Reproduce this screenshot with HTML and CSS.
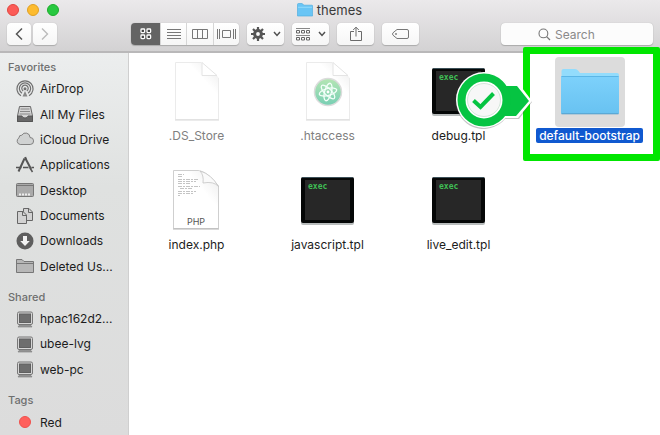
FILE: index.html
```html
<!DOCTYPE html>
<html lang="en">
<head>
  <meta charset="UTF-8">
  <meta name="viewport" content="width=device-width,initial-scale=1">
  <title>themes</title>
  <link rel="stylesheet" href="styles.css">
</head>
<body>

  <!-- shapes used more than once -->
  <svg class="defs" aria-hidden="true">
    <defs>
      <linearGradient id="paper" x1="0" y1="1" x2="1" y2="0">
        <stop offset="0.5" stop-color="#fff"/><stop offset="1" stop-color="#eaeaea"/>
      </linearGradient>
      <linearGradient id="folderblue" x1="0" y1="0" x2="0" y2="1">
        <stop offset="0" stop-color="#7dd1fb"/><stop offset="1" stop-color="#68c2f1"/>
      </linearGradient>
      <linearGradient id="atomgreen" x1="0" y1="0" x2="0" y2="1">
        <stop offset="0" stop-color="#b5e6b4"/><stop offset="1" stop-color="#78cfb4"/>
      </linearGradient>
      <symbol id="exec" viewBox="0 0 70 70">
        <rect x="8" y="12" width="53" height="47" rx="2" fill="#b8bcbc"/>
        <rect x="8" y="11" width="53" height="46" rx="2" fill="#050707"/>
        <path d="M9 11.5H60" stroke="#3c5058"/>
        <rect x="12" y="14" width="45" height="40" fill="#272727"/>
        <text x="15" y="23" class="exectext">exec</text>
      </symbol>
      <symbol id="pc" viewBox="0 0 18 18">
        <rect x="1.5" y="2" width="15" height="12.5" rx="1.5" fill="#d6d6d6" stroke="#777"/>
        <rect x="3.5" y="4" width="11" height="8.5" fill="#6e6e6e" stroke="#606060"/>
        <path d="M3 15.5H15L16 17H2Z" fill="#999" stroke="#777" stroke-width=".6"/>
      </symbol>
      <symbol id="down" viewBox="0 0 8 6">
        <path d="M1 1L4 4.4L7 1" fill="none" stroke="#505050" stroke-width="1.5"/>
      </symbol>
    </defs>
  </svg>

  <header class="toolbar">
    <div class="titlebar">
      <div class="lights">
        <button class="light red" aria-label="Close"></button>
        <button class="light yellow" aria-label="Minimize"></button>
        <button class="light green" aria-label="Zoom"></button>
      </div>
      <h1 class="title">
        <svg width="16" height="14" viewBox="0 0 16 14"><path d="M.5 13V1.5Q.5.5 1.5.5H5L7 2.2H15Q15.6 2.2 15.6 3V13Z" fill="#69c5f5" stroke="#51afe0" stroke-width=".7"/><path d="M1 4.3H15" stroke="#91dafc"/></svg>
        themes
      </h1>
    </div>

    <div class="tools">
      <div class="nav">
        <button class="tool" aria-label="Back"><svg width="8" height="14" viewBox="0 0 8 14"><path d="M7 1.5L1.5 7L7 12.5" fill="none" stroke="#555" stroke-width="1.5"/></svg></button>
        <button class="tool" aria-label="Forward"><svg width="8" height="14" viewBox="0 0 8 14"><path d="M1 1.5L6.5 7L1 12.5" fill="none" stroke="#bbb" stroke-width="1.4"/></svg></button>
      </div>

      <div class="views">
        <button class="view selected" aria-label="Icons"><svg width="12" height="12" viewBox="0 0 12 12" fill="#444" stroke="#fff" stroke-width="1.3"><rect x="1" y="1" width="3.6" height="3.6" rx=".8"/><rect x="7" y="1" width="3.6" height="3.6" rx=".8"/><rect x="1" y="7" width="3.6" height="3.6" rx=".8"/><rect x="7" y="7" width="3.6" height="3.6" rx=".8"/></svg></button>
        <button class="view" aria-label="List"><svg width="14" height="12" viewBox="0 0 14 12"><path d="M0 1.5H14M0 4.5H14M0 7.5H14M0 10.5H14" stroke="#777"/></svg></button>
        <button class="view" aria-label="Columns"><svg width="16" height="12" viewBox="0 0 16 12"><path d="M.5 1.5H15.5V10.5H.5ZM5.5 1.5V10.5M10.5 1.5V10.5" fill="none" stroke="#777"/></svg></button>
        <button class="view" aria-label="Cover Flow"><svg width="19" height="12" viewBox="0 0 19 12"><path d="M5.5 2.5H13.5V9.5H5.5ZM.5 1V11M2.5 1V11M16.5 1V11M18.5 1V11" fill="none" stroke="#777"/></svg></button>
      </div>

      <button class="tool wide" aria-label="Action">
        <svg width="14" height="14" viewBox="0 0 14 14" fill="none" stroke="#555"><path d="M7 0V3M7 11V14M0 7H3M11 7H14M2 2L4.2 4.2M9.8 9.8L12 12M12 2L9.8 4.2M4.2 9.8L2 12" stroke-width="2.2"/><circle cx="7" cy="7" r="3.4" stroke-width="3"/></svg>
        <svg width="8" height="6"><use href="#down"/></svg>
      </button>
      <button class="tool wide" aria-label="Arrange">
        <svg width="14" height="14" viewBox="0 0 14 14" fill="none" stroke="#666"><path d="M0 1.5H14M0 8.5H14" stroke="#888"/><path d="M.5 3.5H3.5V6H.5ZM5.5 3.5H8.5V6H5.5ZM10.5 3.5H13.5V6H10.5ZM.5 10.5H3.5V13H.5ZM5.5 10.5H8.5V13H5.5ZM10.5 10.5H13.5V13H10.5Z"/></svg>
        <svg width="8" height="6"><use href="#down"/></svg>
      </button>
      <button class="tool wide" aria-label="Share"><svg width="12" height="16" viewBox="0 0 12 16"><path d="M4 5.5H.5V14.5H11.5V5.5H8M6 10.5V1.2M3.2 4L6 1.2L8.8 4" fill="none" stroke="#6a6a6a"/></svg></button>
      <button class="tool wide" aria-label="Edit Tags"><svg width="17" height="10" viewBox="0 0 17 10"><path d="M5 .5H15Q16.5.5 16.5 2V8Q16.5 9.5 15 9.5H5L1 6.2Q0 5 1 3.8Z" fill="none" stroke="#777"/><circle cx="4" cy="5" r=".9" fill="#777"/></svg></button>

      <label class="search">
        <svg width="13" height="13" viewBox="0 0 13 13"><circle cx="5.4" cy="5.4" r="4.4" fill="none" stroke="#777" stroke-width="1.1"/><path d="M8.6 8.6L12 12" stroke="#777" stroke-width="1.3"/></svg>
        <input type="search" placeholder="Search" aria-label="Search">
      </label>
    </div>
  </header>

  <div class="window">
    <nav class="sidebar">
      <h2>Favorites</h2>
      <ul class="favorites">
        <li><a href="#"><svg viewBox="0 0 18 18" fill="none" stroke="#707070" stroke-width="1.2"><path d="M5 15.8A8 8 0 1 1 13 15.8M6 13.2A5.6 5.6 0 1 1 12 13.2M7.2 11A3.2 3.2 0 1 1 10.8 11"/><circle cx="9" cy="8.8" r=".9" fill="#666"/><path d="M9 11L6.5 16.5H11.5Z" fill="#888" stroke="none"/></svg>AirDrop</a></li>
        <li><a href="#"><svg viewBox="0 0 18 18"><path d="M3.5 1.5H14.5L16.5 11V16.5H1.5V11Z" fill="#d5d5d5" stroke="#666"/><path d="M4.5 4H13.5M4 6.5H14M3.5 9H14.5" stroke="#888"/><path d="M1.5 11H6Q6 13 9 13Q12 13 12 11H16.5V16.5H1.5Z" fill="#686868" stroke="#555"/></svg>All My Files</a></li>
        <li><a href="#"><svg viewBox="0 0 18 18"><path d="M4.2 14.5A3.6 3.6 0 0 1 3 7.8A2.6 2.6 0 0 1 5.8 5.2A4.4 4.4 0 0 1 14 7.5A3.5 3.5 0 0 1 14.2 14.5Z" fill="#d0d2d2" stroke="#808080"/></svg>iCloud Drive</a></li>
        <li><a href="#"><svg viewBox="0 0 18 18" fill="none" stroke="#555"><path d="M8.5 2.5L2.5 15.5M9.5 2.5L15 13" stroke-width="2"/><path d="M9.2 1L10 4" stroke-width="2"/><path d="M0 11.5H5.5M7 11.5H12.5M15.5 11.5H18" stroke-width="1.4"/><path d="M14 12L16.5 16" stroke-width="1.5"/></svg>Applications</a></li>
        <li><a href="#"><svg viewBox="0 0 18 18"><rect x=".5" y="2.5" width="17" height="13" rx="1" fill="#aaa" stroke="#777"/><path d="M1 4.5H17" stroke="#777"/><path d="M3 13.5H15" stroke="#eee" stroke-width="2" stroke-dasharray="2 1"/></svg>Desktop</a></li>
        <li><a href="#"><svg viewBox="0 0 18 18" fill="#d2d2d2" stroke="#666"><path d="M7.5 1.5H13L16.5 5V13.5H7.5Z"/><path d="M12.5 1.5V5.5H16.5" fill="none"/><path d="M1.5 4.5H7L10.5 8V16.5H1.5Z"/><path d="M6.5 4.5V8.5H10.5" fill="none"/></svg>Documents</a></li>
        <li><a href="#"><svg viewBox="0 0 18 18"><circle cx="9" cy="9" r="8.5" fill="#5e5e5e"/><path d="M7 4H11V9H13.8L9 14L4.2 9H7Z" fill="#f2f2f2"/></svg>Downloads</a></li>
        <li><a href="#"><svg viewBox="0 0 18 18"><path d="M.5 15.5V2.5H6L8 4.5H17.5V15.5Z" fill="#b7b7b7" stroke="#777"/><path d="M1 6.5H17" stroke="#777"/></svg>Deleted Us...</a></li>
      </ul>
      <h2>Shared</h2>
      <ul class="shared">
        <li><a href="#"><svg><use href="#pc"/></svg>hpac162d2...</a></li>
        <li><a href="#"><svg><use href="#pc"/></svg>ubee-lvg</a></li>
        <li><a href="#"><svg><use href="#pc"/></svg>web-pc</a></li>
      </ul>
      <h2>Tags</h2>
      <ul class="tags">
        <li><a href="#"><svg viewBox="0 0 18 18"><circle cx="9" cy="9" r="5.5" fill="#ff605c" stroke="#f0504c"/></svg>Red</a></li>
      </ul>
    </nav>

    <main class="files">
      <a class="file dim" href="#">
        <svg class="icon" viewBox="0 0 70 70"><path d="M13.5 5.5H39L56.5 21V62.5H13.5Z" fill="#fff" stroke="#ebebeb"/><path d="M26 6H39L56 21V38Z" fill="url(#paper)"/><path d="M40 5.5V18.5H55Z" fill="#fff" stroke="#e4e4e4"/><path d="M13 63H57" stroke="#d8d8d8"/></svg>
        <span class="name">.DS_Store</span>
      </a>
      <a class="file dim" href="#">
        <svg class="icon" viewBox="0 0 70 70"><path d="M13.5 5.5H39L56.5 21V62.5H13.5Z" fill="#fff" stroke="#ebebeb"/><path d="M26 6H39L56 21V38Z" fill="url(#paper)"/><path d="M40 5.5V18.5H55Z" fill="#fff" stroke="#e4e4e4"/><path d="M13 63H57" stroke="#d8d8d8"/>
          <circle cx="35" cy="35" r="13.5" fill="url(#atomgreen)" stroke="#dcdcdc" stroke-width="1.5"/>
          <g fill="none" stroke="#f4fffa" stroke-width="1.3"><ellipse cx="35" cy="35" rx="3.4" ry="9" transform="rotate(15 35 35)"/><ellipse cx="35" cy="35" rx="3.4" ry="9" transform="rotate(75 35 35)"/><ellipse cx="35" cy="35" rx="3.4" ry="9" transform="rotate(135 35 35)"/></g>
          <circle cx="35" cy="35" r="1.4" fill="#fff"/></svg>
        <span class="name">.htaccess</span>
      </a>
      <a class="file" href="#">
        <svg class="icon"><use href="#exec"/></svg>
        <span class="name">debug.tpl</span>
      </a>
      <a class="file active" href="#">
        <svg class="icon" viewBox="0 0 70 70"><path d="M6.5 56V14Q6.5 12 8.5 12H20Q22 12 23.5 14L25 16H62Q64 16 64 18V56Z" fill="#93dcfc"/><rect x="6" y="19" width="58" height="38" rx="1" fill="url(#folderblue)"/><path d="M6.5 19.5H63.5" stroke="#5cb6e6"/><path d="M6.5 56.8H63.5" stroke="#549fca"/></svg>
        <span class="name">default-bootstrap</span>
        <span class="frame"></span>
        <svg class="pointer" width="80" height="62" viewBox="0 0 80 62">
          <path d="M30 3A28 28 0 1 0 51 49H65L78 32L65 16H54A28 28 0 0 0 30 3Z" fill="#555" opacity=".35"/>
          <path d="M45 14H65L78 31L64 48H45Z" fill="#fff"/>
          <circle cx="30" cy="30" r="28" fill="#fff"/>
          <path d="M44 16H63L75 31L62 46H44Z" fill="#06c442"/>
          <circle cx="30" cy="30" r="22.5" fill="#fff" stroke="#06c442" stroke-width="8"/>
          <circle cx="30" cy="30" r="16.5" fill="#f7f7f7" stroke="#b9d9c2" stroke-width=".6"/>
          <path d="M19.5 30.5L26.5 37L39.5 23.5" fill="none" stroke="#06c442" stroke-width="4"/>
        </svg>
      </a>
      <a class="file" href="#">
        <svg class="icon" viewBox="0 0 70 70"><path d="M11.5 4.5H36Q45 5 56.5 20V62.5H11.5Z" fill="#fff" stroke="#cfcfcf"/><path d="M24 5H36Q45 6 56 20V42Z" fill="url(#paper)"/><path d="M38 5Q42 9 41 17Q52 15 56.5 20.5Q49 8 38 5Z" fill="#fafafa" stroke="#c4c4c4" stroke-width=".8"/><path d="M11 63H57" stroke="#b4b4b4"/>
          <path d="M16 8.5H22M16 10.5H20M16 13.5H36M16 15.5H34M16 17.5H29M16 20.5H38M18 22.5H30M16 25.5H34M16 27.5H31M16 29.5H18" stroke="#aaa" stroke-width=".7" stroke-dasharray="4 1 2 1"/>
          <text x="34" y="59" text-anchor="middle" class="phptext">PHP</text></svg>
        <span class="name">index.php</span>
      </a>
      <a class="file" href="#">
        <svg class="icon"><use href="#exec"/></svg>
        <span class="name">javascript.tpl</span>
      </a>
      <a class="file" href="#">
        <svg class="icon"><use href="#exec"/></svg>
        <span class="name">live_edit.tpl</span>
      </a>
    </main>
  </div>

</body>
</html>
```

FILE: styles.css
```css
* {
  box-sizing: border-box;
}

body {
  margin: 0;
  min-height: 100vh;
  display: flex;
  flex-direction: column;
  font-family: Inter, Roboto, "Liberation Sans", sans-serif;
  font-size: 12px;
  color: #1c1c1c;
  background: #fff;
}

a {
  color: inherit;
  text-decoration: none;
}

svg {
  flex: none;
}

.defs {
  position: absolute;
  width: 0;
  height: 0;
}


/*toolbar*/

.toolbar {
  height: 53px;
  background: linear-gradient(#ebe9eb, #d3d2d3);
  border-bottom: 2px solid #b9b8b9;
}

.titlebar {
  display: grid;
  grid-template-columns: 1fr auto 1fr;
  align-items: center;
  height: 20px;
  padding: 0 8px 0 7px;
}

.lights {
  display: flex;
  gap: 8px;
}

.light {
  width: 12px;
  height: 12px;
  padding: 0;
  border: 1px solid;
  border-radius: 50%;
}

.light.red {
  background: #fc5b57;
  border-color: #e24640;
}

.light.yellow {
  background: #fdbb2e;
  border-color: #e0a023;
}

.light.green {
  background: #28c840;
  border-color: #1dad2b;
}

.title {
  display: flex;
  align-items: center;
  gap: 4px;
  margin: 0;
  font-size: 13px;
  font-weight: 400;
  color: #3a3a3a;
}

.tools {
  display: flex;
  gap: 8px;
  padding: 3px 7px;
}

.nav {
  display: flex;
  gap: 1px;
  margin-right: 66px;
}

.tool, .view {
  display: flex;
  align-items: center;
  justify-content: center;
  height: 22px;
  padding: 0;
  border: none;
  background: linear-gradient(#fff, #f6f6f6);
}

.tool {
  width: 25px;
  border-radius: 4px;
  box-shadow: 0 0 1px #aaa, 0 1px 1px #aaa;
}

.tool.wide {
  width: 37px;
  gap: 8px;
}

.nav .tool {
  width: 24px;
}

.nav {
  gap: 2px;
}

.views {
  display: flex;
  width: 108px;
  border-radius: 4px;
  box-shadow: 0 0 1px #aaa, 0 1px 1px #aaa;
  overflow: hidden;
}

.view {
  flex: 1;
  border-left: 1px solid #d6d6d6;
}

.view.selected {
  flex: 0 0 29px;
  border: none;
  background: #646464;
}

.search {
  display: flex;
  align-items: center;
  gap: 4px;
  width: 152px;
  height: 22px;
  margin-left: auto;
  padding-left: 37px;
  border-radius: 4px;
  background: #fcfcfc;
  box-shadow: 0 0 1px #aaa, 0 1px 1px #aaa;
}

.search input {
  width: 100%;
  min-width: 0;
  padding: 0;
  border: none;
  outline: none;
  background: none;
  font: inherit;
}

.search input::placeholder {
  color: #8a8a8a;
}


/*sidebar*/

.window {
  flex: 1;
  display: flex;
}

.sidebar {
  width: 129px;
  padding-top: 5px;
  background: linear-gradient(#eceeee, #dfe1e0 35%, #dcdcdc);
  border-right: 1px solid #cfcfcf;
}

.sidebar h2 {
  margin: 9px 0 0 8px;
  font-size: 11px;
  line-height: 18px;
  font-weight: 500;
  color: #6e6f6f;
}

.sidebar h2:first-child {
  margin-top: 0;
}

.sidebar ul {
  display: grid;
  grid-auto-rows: 1fr;
  margin: 0;
  padding: 0 0 0 16px;
  list-style: none;
}

.sidebar .favorites {
  height: 203px;
}

.sidebar .shared {
  height: 76px;
}

.sidebar .tags {
  height: 26px;
}

.sidebar a {
  display: flex;
  align-items: center;
  gap: 6px;
  height: 100%;
  white-space: nowrap;
}

.sidebar svg {
  width: 18px;
  height: 18px;
}


/*files*/

.files {
  flex: 1;
  display: grid;
  grid-template-columns: repeat(4, 1fr);
  align-content: start;
  row-gap: 23px;
  padding: 4px 5px 0 2px;
}

.file {
  position: relative;
  display: flex;
  flex-direction: column;
  align-items: center;
  gap: 1px;
}

.icon {
  width: 70px;
  height: 70px;
  border-radius: 4px;
}

.name {
  padding: 0 3px;
  border-radius: 2px;
  line-height: 15px;
}

.dim .name {
  color: #808080;
}

.active .icon {
  background: #dcdcdc;
}

.active .name {
  background: #1059d0;
  color: #fff;
  font-weight: 500;
}

.exectext {
  font-family: "DejaVu Sans Mono", monospace;
  font-size: 8px;
  font-weight: 700;
  fill: #3fbe55;
}

.phptext {
  font-size: 9px;
  fill: #555;
}


/*highlight over the folder*/

.frame {
  position: absolute;
  inset: -10px -5px -18px -1px;
  border: 7px solid #00e600;
  border-radius: 2px;
}

.pointer {
  position: absolute;
  top: 13px;
  left: -70px;
}
```
